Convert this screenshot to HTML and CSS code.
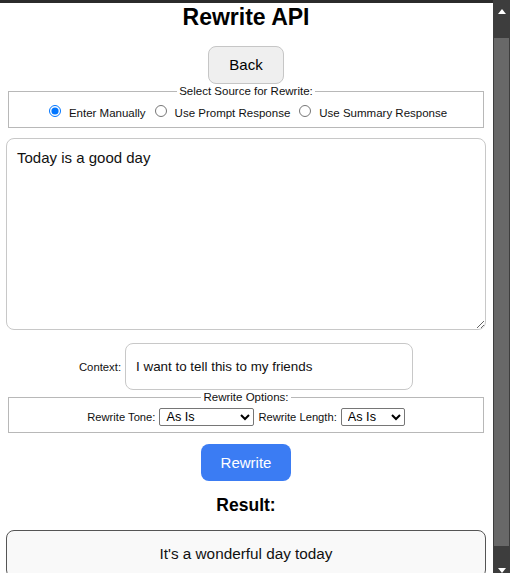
FILE: index.html
```html
<!DOCTYPE html>
<html lang="en">
<head>
<meta charset="utf-8">
<title>Rewrite API</title>
<link rel="stylesheet" href="styles.css">
</head>
<body>
<div class="topbar"></div>
<main class="page">
  <div class="title">Rewrite API</div>
  <button class="back-btn" type="button">Back</button>

  <fieldset class="group">
    <legend class="group-legend">Select Source for Rewrite:</legend>
    <div class="radios">
      <label class="radio-item"><input type="radio" name="src" checked><span>Enter Manually</span></label>
      <label class="radio-item"><input type="radio" name="src"><span>Use Prompt Response</span></label>
      <label class="radio-item"><input type="radio" name="src"><span>Use Summary Response</span></label>
    </div>
  </fieldset>

  <textarea class="source-text">Today is a good day</textarea>

  <div class="context-row">
    <label class="context-label" for="ctx">Context:</label>
    <input id="ctx" class="context-input" type="text" value="I want to tell this to my friends">
  </div>

  <fieldset class="group group-options">
    <legend class="group-legend">Rewrite Options:</legend>
    <div class="options">
      <label class="opt-label" for="tone">Rewrite Tone:</label>
      <select id="tone" class="opt-select tone"><option>As Is</option></select>
      <label class="opt-label" for="len">Rewrite Length:</label>
      <select id="len" class="opt-select length"><option>As Is</option></select>
    </div>
  </fieldset>

  <button class="rewrite-btn" type="button">Rewrite</button>

  <div class="result-title">Result:</div>
  <div class="result-box">It's a wonderful day today</div>
</main>

<div class="scrollbar">
  <div class="sb-arrow sb-up"></div>
  <div class="sb-thumb"></div>
  <div class="sb-arrow sb-down"></div>
</div>
</body>
</html>
```

FILE: styles.css
```css
html, body {
  margin: 0;
  padding: 0;
  background: #ffffff;
  overflow: hidden;
}

body {
  font-family: "Liberation Sans", Arial, sans-serif;
  color: #000;
}

.topbar {
  height: 3px;
  background: #2b2b2b;
}

.page {
  width: 480px;
  padding: 0 7px 0 6px;
}

.title {
  margin-top: 1px;
  font-size: 23px;
  line-height: 26px;
  font-weight: bold;
  text-align: center;
}

.back-btn {
  display: block;
  margin: 16px auto 0;
  height: 38px;
  padding: 0 20px;
  font-family: inherit;
  font-size: 15px;
  line-height: 36px;
  color: #000;
  background: #efefef;
  border: 1px solid #c6c6c6;
  border-radius: 8px;
}

.group {
  margin: 0 2px;
  padding: 0 10px 4px;
  border: 1px solid #b8b8b8;
  min-width: 0;
}

.group-legend {
  margin: 0 auto;
  padding: 0 2px;
  font-size: 11.5px;
  line-height: 14px;
  color: #111;
}

.radios {
  margin-top: 5px;
  display: flex;
  justify-content: center;
  align-items: center;
  gap: 9px;
  padding-left: 4px;
  height: 20px;
  font-size: 11.5px;
  color: #111;
}

.radio-item {
  display: inline-flex;
  align-items: center;
  gap: 8px;
}

.radio-item input {
  margin: 0;
  width: 12px;
  height: 12px;
  position: relative;
  top: -2px;
}

.source-text {
  display: block;
  box-sizing: border-box;
  width: 480px;
  height: 192px;
  margin: 10px 0 0;
  padding: 10px;
  font-family: inherit;
  font-size: 15px;
  line-height: 18px;
  color: #111;
  border: 1px solid #c8c8c8;
  border-radius: 8px;
}

.context-row {
  margin-top: 13px;
  display: flex;
  justify-content: center;
  align-items: center;
  gap: 4px;
}

.context-label {
  font-size: 11.3px;
  color: #111;
}

.context-input {
  box-sizing: border-box;
  width: 288px;
  height: 47px;
  margin: 0;
  padding: 0 10px;
  font-family: inherit;
  font-size: 13.4px;
  color: #111;
  border: 1px solid #c8c8c8;
  border-radius: 8px;
}

.group-options {
  padding-bottom: 6px;
}

.options {
  margin-top: 4px;
  display: flex;
  justify-content: center;
  align-items: center;
  gap: 4px;
  font-size: 11.2px;
  color: #111;
}

.opt-select {
  box-sizing: border-box;
  height: 18px;
  margin: 0;
  padding: 0 0 0 2px;
  font-family: inherit;
  font-size: 12.7px;
  color: #000;
  background: #fff;
  border: 1px solid #767676;
  border-radius: 2px;
}

.opt-select.tone { width: 95px; }
.opt-select.length { width: 64px; }

.rewrite-btn {
  display: block;
  margin: 11px auto 0;
  width: 90px;
  height: 37px;
  padding: 0;
  font-family: inherit;
  font-size: 15px;
  color: #fff;
  background: #3b7cf3;
  border: none;
  border-radius: 8px;
}

.result-title {
  margin-top: 14px;
  font-size: 17.5px;
  line-height: 20px;
  font-weight: bold;
  text-align: center;
}

.result-box {
  margin-top: 15px;
  padding: 14px 10px;
  font-size: 15.3px;
  line-height: 18px;
  text-align: center;
  color: #111;
  background: #f9f9f9;
  border: 1px solid #555;
  border-radius: 8px;
}

.scrollbar {
  position: fixed;
  top: 0;
  right: 0;
  bottom: 0;
  width: 17px;
  background: #3d3d3d;
  display: flex;
  flex-direction: column;
  align-items: center;
}

.sb-arrow {
  width: 0;
  height: 0;
  border-left: 4px solid transparent;
  border-right: 4px solid transparent;
}

.sb-up {
  margin-top: 9px;
  border-bottom: 5px solid #ffffff;
}

.sb-thumb {
  margin-top: 24px;
  width: 15px;
  flex: 1;
  background: #686868;
}

.sb-down {
  margin-top: 22px;
  margin-bottom: 0;
  border-top: 5px solid #ffffff;
}
```
